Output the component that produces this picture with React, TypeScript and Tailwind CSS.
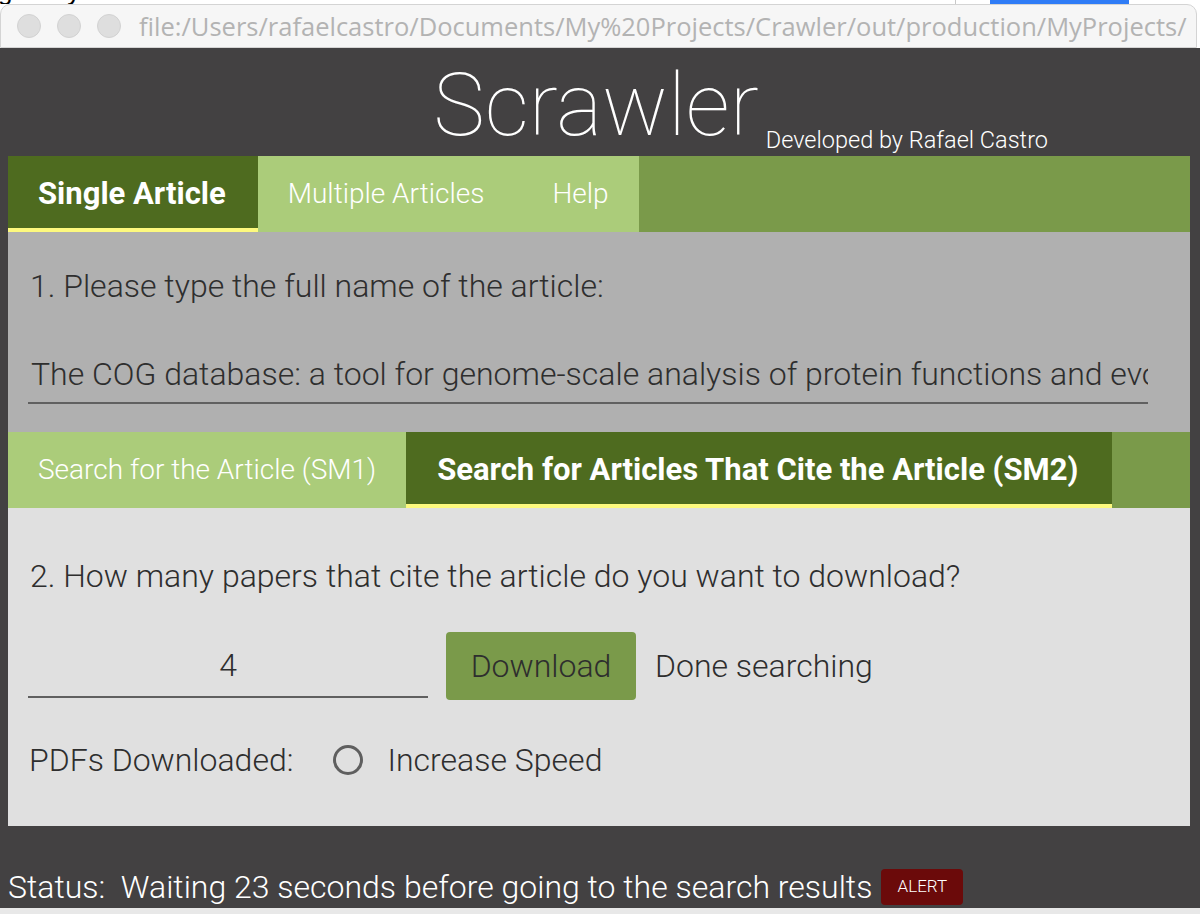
import React from "react";

export default function App() {
  return (
    <div className="w-[1200px] h-[914px] overflow-hidden bg-white flex flex-col font-['Roboto',sans-serif]">
      {/* top strip from underlying window */}
      <div className="h-[4px] relative overflow-hidden bg-white shrink-0">
        <div className="absolute left-[-2px] top-[-22px] text-[26px] leading-[26px] text-black font-['Liberation_Sans',sans-serif] whitespace-nowrap">gial my best</div>
        <div className="absolute left-[955px] top-0 w-[1px] h-[4px] bg-[#c8c8c8]" />
        <div className="absolute left-[990px] top-0 w-[139px] h-[4px] bg-[#2f7cf6]" />
      </div>
      {/* title bar */}
      <div className="h-[44px] shrink-0 bg-[#f6f6f6] rounded-t-[10px] border-t border-x border-b border-[#d4d4d4] mr-[3px] flex items-center">
        <div className="flex gap-[16px] pl-[16px]">
          <div className="w-[24px] h-[24px] rounded-full bg-[#dedede] border border-[#d2d2d2]" />
          <div className="w-[24px] h-[24px] rounded-full bg-[#dedede] border border-[#d2d2d2]" />
          <div className="w-[24px] h-[24px] rounded-full bg-[#dedede] border border-[#d2d2d2]" />
        </div>
        <div className="ml-[18px] text-[25.5px] text-[#b3b3b3] font-['Open_Sans',sans-serif] whitespace-nowrap">
          file:/Users/rafaelcastro/Documents/My%20Projects/Crawler/out/production/MyProjects/
        </div>
      </div>
      {/* app */}
      <div className="flex-1 bg-[#434142] pl-[8px] pr-[10px] flex flex-col">
        {/* header */}
        <div className="h-[108px] grid grid-cols-[1fr_auto_1fr] pt-[13px]">
          <div />
          <div className="text-[87px] leading-[88px] font-thin text-white mr-[6px]">Scrawler</div>
          <div className="self-end pl-[1px] relative top-[-4px] text-[23.5px] leading-[24px] font-light text-white whitespace-nowrap">
            Developed by Rafael Castro
          </div>
        </div>
        {/* main tabs */}
        <div className="h-[76px] bg-[#7a9a4a] flex">
          <div className="bg-[#4e6b1f] pl-[30px] pr-[32px] flex items-center border-b-[4px] border-[#fdf97e] text-white font-bold text-[31px]">
            <span className="relative top-[2px]">Single Article</span>
          </div>
          <div className="bg-[#abcc7a] flex items-center text-white font-light text-[28px] pr-[30px]">
            <span className="pl-[30px]">Multiple Articles</span>
            <span className="pl-[68px]">Help</span>
          </div>
        </div>
        {/* gray panel */}
        <div className="h-[200px] bg-[#b0b0b0] px-[20px] pt-[36px] text-[#2e2e2e] font-light text-[32px] leading-[36px]">
          <div className="pl-[2px]">1. Please type the full name of the article:</div>
          <div className="mt-[52px] w-[1120px] border-b-2 border-[#606060] pb-[10px] overflow-hidden whitespace-nowrap">
            <span className="pl-[3px]">The COG database: a tool for genome-scale analysis of protein functions and evolution</span>
          </div>
        </div>
        {/* sub tabs */}
        <div className="h-[76px] bg-[#7a9a4a] flex">
          <div className="bg-[#abcc7a] px-[30px] flex items-center text-white font-light text-[28px]">
            Search for the Article (SM1)
          </div>
          <div className="bg-[#4e6b1f] pl-[31px] pr-[34px] flex items-center border-b-[4px] border-[#fdf97e] text-white font-bold text-[31px]">
            <span className="relative top-[2px]">Search for Articles That Cite the Article (SM2)</span>
          </div>
        </div>
        {/* light panel */}
        <div className="h-[318px] bg-[#e0e0e0] px-[20px] pt-[50px] text-[#2e2e2e] font-light text-[32px] leading-[36px]">
          <div className="pl-[2px]">2. How many papers that cite the article do you want to download?</div>
          <div className="mt-[38px] flex items-center">
            <div className="w-[400px] h-[64px] border-b-2 border-[#606060] flex items-center justify-center">4</div>
            <div className="ml-[18px] w-[190px] h-[68px] rounded-[4px] bg-[#7a9a4a] flex items-center justify-center">Download</div>
            <div className="ml-[19px]">Done searching</div>
          </div>
          <div className="mt-[42px] flex items-center pl-[1px]">
            <span>PDFs Downloaded:</span>
            <span className="ml-[40px] w-[30px] h-[30px] rounded-full border-[3px] border-[#5f5f5f]" />
            <span className="ml-[24px]">Increase Speed</span>
          </div>
        </div>
        {/* status */}
        <div className="flex-1 flex items-end pb-[3px] -ml-[8px]">
          <div className="flex items-center gap-[9px]">
            <span className="text-white font-light text-[32px] leading-[36px] whitespace-pre pl-[8px]">Status:  Waiting 23 seconds before going to the search results</span>
            <span className="bg-[#6b0a0a] rounded-[4px] w-[82px] h-[36px] flex items-center justify-center text-white font-light text-[17px]">ALERT</span>
          </div>
        </div>
      </div>
      <div className="h-[6px] bg-[#e8e8e8] shrink-0" />
    </div>
  );
}
